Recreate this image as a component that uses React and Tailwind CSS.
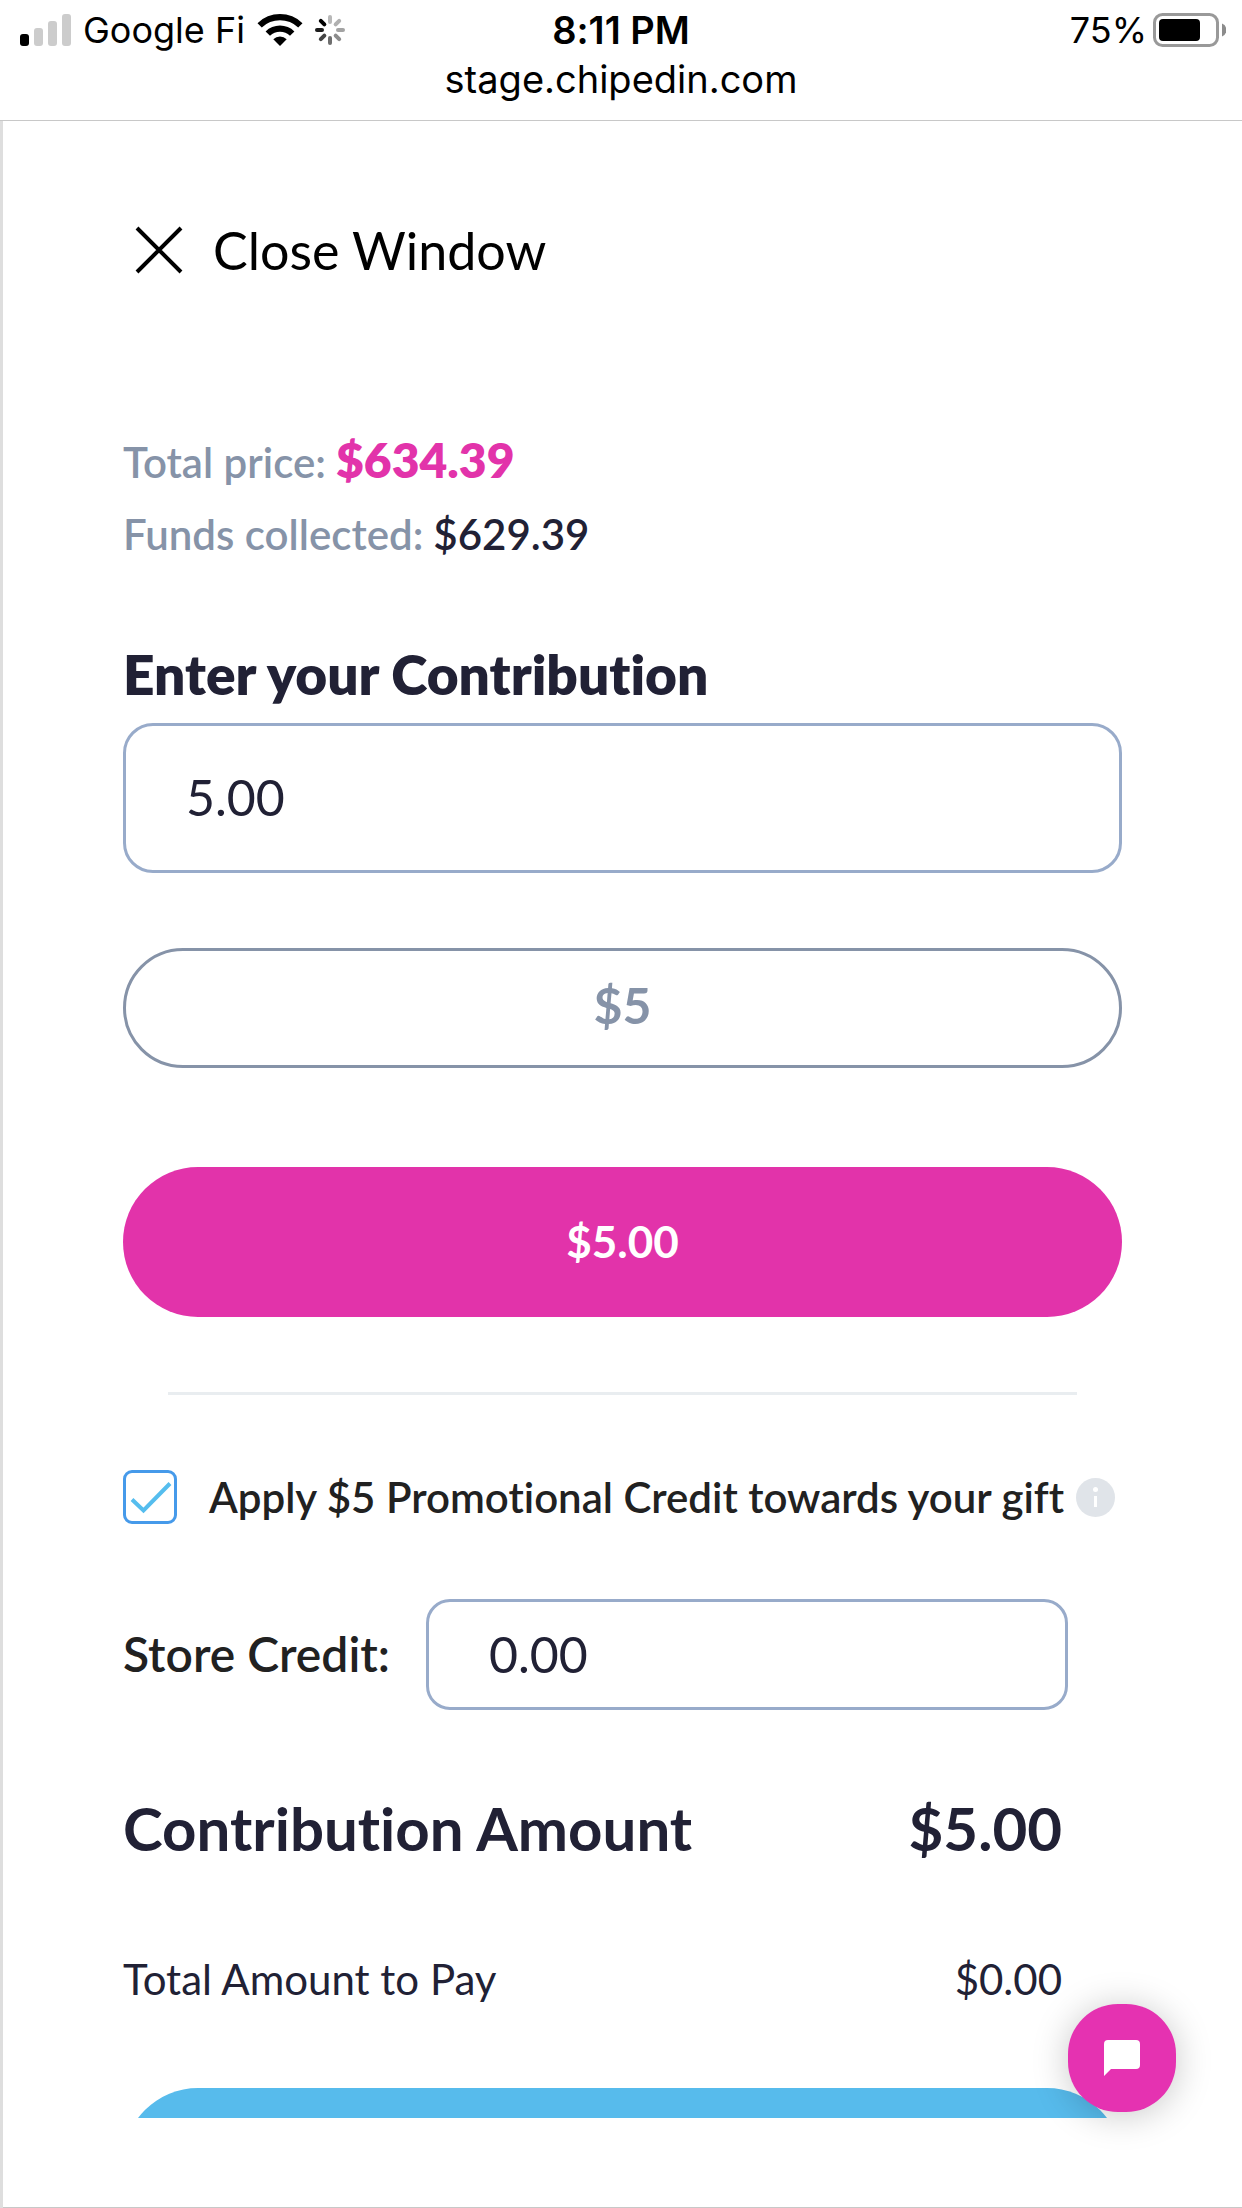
import { useState } from "react";

// colour of each spoke, clockwise from the top
const SPOKES = [
  { angle: 0, color: "#b8b8b8" },
  { angle: 45, color: "#b0b0b0" },
  { angle: 90, color: "#a3a3a3" },
  { angle: 135, color: "#8c8c8c" },
  { angle: 180, color: "#6e6e6e" },
  { angle: 225, color: "#444444" },
  { angle: 270, color: "#1c1c1c" },
  { angle: 315, color: "#000000" },
];

function SignalIcon() {
  return (
    <svg width="51" height="32" viewBox="0 0 51 32" aria-hidden="true">
      <rect x="0" y="20" width="9" height="12" rx="3" fill="#000" />
      <rect x="14" y="14" width="9" height="18" rx="3" fill="#ccc" />
      <rect x="28" y="7" width="9" height="25" rx="3" fill="#ccc" />
      <rect x="42" y="0" width="9" height="32" rx="3" fill="#ccc" />
    </svg>
  );
}

function WifiIcon() {
  return (
    <svg width="46" height="34" viewBox="0 0 46 34" aria-hidden="true">
      <path d="M0.5 10.2a32 32 0 0 1 45 0l-4.3 4.4a26 26 0 0 0-36.4 0z" />
      <path d="M8.6 18.4a20.5 20.5 0 0 1 28.8 0l-4.4 4.4a14.3 14.3 0 0 0-20 0z" />
      <path d="M16.3 26.2a9.6 9.6 0 0 1 13.4 0L23 33z" />
    </svg>
  );
}

function SpinnerIcon() {
  return (
    <svg width="30" height="30" viewBox="0 0 30 30" aria-hidden="true">
      {SPOKES.map((s) => (
        <rect
          key={s.angle}
          x="13"
          y="0"
          width="4"
          height="9"
          rx="2"
          fill={s.color}
          transform={`rotate(${s.angle} 15 15)`}
        />
      ))}
    </svg>
  );
}

function BatteryIcon() {
  return (
    <svg width="73" height="34" viewBox="0 0 73 34" aria-hidden="true">
      <rect x="1.5" y="1.5" width="63" height="31" rx="8" fill="none" stroke="#999" strokeWidth="3" />
      <rect x="6" y="6" width="41" height="22" rx="4" fill="#000" />
      <path d="M69 10.5a7 7 0 0 1 0 13z" fill="#8c8c8c" />
    </svg>
  );
}

function StatusBar() {
  return (
    <header className="shrink-0 h-[121px] border-b border-[#c8c8c8] font-['Inter',sans-serif] text-black">
      <div className="grid grid-cols-3 items-center h-[60px] px-4 text-[36px] leading-[60px]">
        <div className="flex items-center gap-3 pl-1">
          <SignalIcon />
          <span>Google Fi</span>
          <WifiIcon />
          <SpinnerIcon />
        </div>
        <span className="text-center text-[38px] font-semibold">8:11 PM</span>
        <div className="flex items-center justify-end gap-1.5">
          <span>75%</span>
          <BatteryIcon />
        </div>
      </div>
      <p className="text-center text-[38px] leading-[38px]">stage.chipedin.com</p>
    </header>
  );
}

export default function App() {
  const [amount, setAmount] = useState("5.00");
  const [storeCredit, setStoreCredit] = useState("0.00");
  const [promo, setPromo] = useState(true);

  return (
    <div className="flex flex-col h-screen bg-white font-['Lato',sans-serif] [font-variant-ligatures:none] text-[#212135]">
      <StatusBar />

      <main className="flex flex-col flex-1 min-h-0 border-l-[3px] border-[#dedede]">
        <div className="flex-1 min-h-0 overflow-hidden px-[120px] pt-[96px]">
          <button type="button" className="flex items-center gap-[30px] pl-3 text-[52px] leading-[66px] text-black">
            <svg width="48" height="48" viewBox="0 0 48 48" stroke="#000" strokeWidth="4" aria-hidden="true">
              <path d="M2 2l44 44M46 2L2 46" />
            </svg>
            Close Window
          </button>

          <div className="mt-[141px] text-[42px] leading-[72px] font-semibold text-[#8693a8]">
            <p className="flex items-baseline gap-2.5">
              Total price: <span className="text-[48px] font-extrabold text-[#e233aa]">$634.39</span>
            </p>
            <p className="flex items-baseline gap-2.5">
              Funds collected: <span className="text-[#212135]">$629.39</span>
            </p>
          </div>

          <label htmlFor="amount" className="block mt-[71px] text-[55px] leading-[66px] font-extrabold">
            Enter your Contribution
          </label>
          <input
            id="amount"
            type="text"
            value={amount}
            onChange={(e) => setAmount(e.target.value)}
            className="block w-full h-[150px] mt-4 px-[60px] pb-0.5 border-[3px] border-[#98abca] rounded-[30px] text-[50px]"
          />

          <button
            type="button"
            onClick={() => setAmount("5.00")}
            className="block w-full h-[120px] mt-[75px] pb-1.5 border-[3px] border-[#8693a8] rounded-full text-[50px] font-bold text-[#8693a8]"
          >
            $5
          </button>
          <button
            type="button"
            className="block w-full h-[150px] mt-[99px] pb-0.5 rounded-full bg-[#e233aa] text-[44px] font-bold text-white"
          >
            $5.00
          </button>

          <hr className="mx-[45px] my-[75px] border-t-[3px] border-[#e9edf0]" />

          <div className="flex items-center h-[54px]">
            <span className="relative size-[54px] shrink-0">
              <input
                id="promo"
                type="checkbox"
                checked={promo}
                onChange={(e) => setPromo(e.target.checked)}
                className="block appearance-none size-full border-[3px] border-[#469aea] rounded-[9px]"
              />
              {promo && (
                <svg
                  className="absolute inset-0 pointer-events-none"
                  viewBox="0 0 54 54"
                  fill="none"
                  stroke="#55bdee"
                  strokeWidth="4"
                  aria-hidden="true"
                >
                  <path d="M9 29.5l11.5 11L47 13.5" />
                </svg>
              )}
            </span>
            <label htmlFor="promo" className="ml-8 text-[42px] leading-[54px] font-semibold text-[#212121] whitespace-nowrap">
              Apply $5 Promotional Credit towards your gift
            </label>
            <button type="button" aria-label="About promotional credit" className="ml-3 shrink-0">
              <svg width="39" height="39" viewBox="0 0 39 39">
                <circle cx="19.5" cy="19.5" r="19.5" fill="#e0e4e9" />
                <circle cx="19.5" cy="11.5" r="2.5" fill="#fff" />
                <rect x="18" y="18" width="3" height="11" fill="#fff" />
              </svg>
            </button>
          </div>

          <div className="flex items-center gap-9 mt-[75px] pr-[54px]">
            <label htmlFor="credit" className="pb-0.5 text-[48px] font-semibold text-[#212121] whitespace-nowrap">
              Store Credit:
            </label>
            <input
              id="credit"
              type="text"
              value={storeCredit}
              onChange={(e) => setStoreCredit(e.target.value)}
              className="flex-1 min-w-0 h-[111px] px-[60px] pb-0.5 border-[3px] border-[#98abca] rounded-[24px] text-[50px]"
            />
          </div>

          <div className="flex justify-between mt-[82px] pr-[60px] text-[60px] leading-[72px] font-bold">
            <span>Contribution Amount</span>
            <span>$5.00</span>
          </div>
          <div className="flex justify-between mt-[85px] pr-[60px] text-[42px] leading-[60px]">
            <span>Total Amount to Pay</span>
            <span>$0.00</span>
          </div>

          {/* only the top of the pay button shows above the fold */}
          <button type="button" aria-label="Pay" className="block w-full h-[150px] mt-[79px] rounded-full bg-[#57bbec]" />
        </div>
        <div className="shrink-0 h-[90px] border-b border-[#c8c8c8]" />
      </main>

      <button
        type="button"
        aria-label="Open chat"
        className="fixed right-[66px] bottom-[96px] flex items-center justify-center size-[108px] rounded-[50px] bg-[#e532b1] shadow-[0_3px_36px_rgba(0,0,0,0.22)]"
      >
        <svg width="36" height="36" viewBox="0 0 36 36" fill="#fff" aria-hidden="true">
          <path d="M4 0h28a4 4 0 0 1 4 4v21a4 4 0 0 1-4 4H7l-7 7V4a4 4 0 0 1 4-4z" />
        </svg>
      </button>
    </div>
  );
}
